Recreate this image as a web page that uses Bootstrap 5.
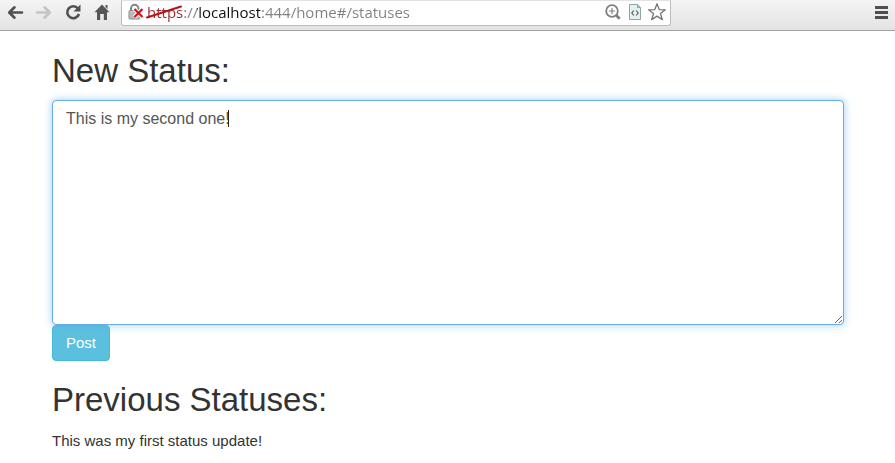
<!DOCTYPE html>
<html lang="en">
<head>
<meta charset="utf-8">
<meta name="viewport" content="width=device-width, initial-scale=1">
<title>Statuses</title>
<link href="https://cdn.jsdelivr.net/npm/bootstrap@5.3.0/dist/css/bootstrap.min.css" rel="stylesheet">
<style>
body { font: 15px/21px "Liberation Sans", Arial, sans-serif; color: #333; background: #fff; }
.toolbar { height: 31px; padding: 0 5px 5px; background: linear-gradient(#f4f4f4, #e3e3e3); border-bottom: 1px solid #a3a3a3; }
.tool { width: 20px; height: 20px; padding: 0; border: 0; background: none; line-height: 0; flex: none; }
.tool svg, .address svg { display: block; }
.nav-tools { width: 116px; gap: 9px; flex: none; }
.address { flex: 0 1 550px; min-width: 0; height: 26px; padding: 0 3px 1px 6px; background: #fff; border: 1px solid #bdbdbd; border-top-color: #e2e2e2; border-radius: 0 0 3px 3px; }
.address-tools { gap: 2px; }
.url-box { margin-left: 3px; }
.url { display: block; width: 100%; height: 22px; padding: 0; border: 0; outline: 0; font: 15px/22px "Open Sans", "Noto Sans", sans-serif; color: transparent;
  background: linear-gradient(90deg, #a3262c 36px, #808080 36px 50px, #111 50px 113px, #808080 113px) text; -webkit-background-clip: text; background-clip: text; }
.strike { left: -1px; top: 3px; pointer-events: none; }
.page { padding: 20px 51px 0 52px; }
h1 { font-size: 33px; line-height: 40px; font-weight: 400; margin: 0; color: #333; }
h1 label { display: block; }
.status-box { margin-top: 9px; }
.status-input { height: 225px; padding: 7px 13px; font-size: 16px; line-height: 21px; color: #555; border: 1px solid #66afe9; border-radius: 4px; box-shadow: 0 0 8px rgba(102, 175, 233, .6); }
.status-input:focus { color: #555; border-color: #66afe9; box-shadow: 0 0 8px rgba(102, 175, 233, .6); }
.caret { left: 176px; top: 10px; width: 1px; height: 17px; background: #222; }
.btn-post { height: 36px; padding: 0 13px; font-size: 15px; line-height: 34px; border-radius: 4px; color: #fff; background: #5bc0de; border-color: #46b8da; }
.btn-post:hover { color: #fff; background: #31b0d5; }
.previous { margin-top: 19px; }
.status-text { margin: 10px 0 0; }
</style>
</head>
<body>
<header class="toolbar d-flex align-items-center">
  <div class="nav-tools d-flex align-items-center">
    <button class="tool" type="button" aria-label="Back"><svg width="20" height="20" viewBox="0 0 20 20" fill="none" stroke="#505050" stroke-width="2.6" stroke-linecap="round" stroke-linejoin="round"><path d="M17 9.500H4.500M9.500 4.300 4.200 9.500l5.300 5.200"/></svg></button>
    <button class="tool" type="button" aria-label="Forward"><svg width="20" height="20" viewBox="0 0 20 20" fill="none" stroke="#c4c4c4" stroke-width="2.6" stroke-linecap="round" stroke-linejoin="round"><path d="M3 9.500h12.500M10.500 4.300 15.800 9.500l-5.300 5.200"/></svg></button>
    <button class="tool" type="button" aria-label="Reload"><svg width="20" height="20" viewBox="0 0 20 20"><path d="M15 5.500A6 6 0 1 0 16 11" fill="none" stroke="#505050" stroke-width="2.6"/><path d="M17.500 1.500V8.500H10.500Z" fill="#505050"/></svg></button>
    <button class="tool" type="button" aria-label="Home"><svg width="20" height="20" viewBox="0 0 20 20" fill="#555"><path d="M10 1.500 17.500 9.300H15V17H11.800V11H8.200V17H5V9.300H2.500ZM13.500 2H15.500V6L13.500 4Z"/></svg></button>
  </div>
  <div class="address d-flex align-items-center">
    <svg class="flex-shrink-0" width="16" height="18" viewBox="0 0 16 18" aria-hidden="true"><path d="M3 9V5.500a3.700 3.700 0 0 1 7.400 0V9" fill="none" stroke="#858585" stroke-width="2"/><rect x="1" y="7.500" width="11" height="8.500" rx="1" fill="#c9c9c9" stroke="#858585"/><path d="M2 10h9M2 12h9M2 14h9" stroke="#aaa"/><path d="m6.500 6 8 8m0-8-8 8" stroke="#fff" stroke-width="4"/><path d="m6.500 6 8 8m0-8-8 8" stroke="#d3131b" stroke-width="2.3"/></svg>
    <div class="url-box position-relative flex-grow-1">
      <input class="url" type="text" aria-label="Address" value="https://localhost:444/home#/statuses" spellcheck="false">
      <svg class="strike position-absolute" width="38" height="16" viewBox="0 0 38 16" aria-hidden="true"><path d="M1 13.500 35 2.500" stroke="#b3151b" stroke-width="2" stroke-linecap="round"/></svg>
    </div>
    <div class="address-tools d-flex align-items-center flex-shrink-0">
      <button class="tool" type="button" aria-label="Zoom"><svg width="20" height="20" viewBox="0 0 20 20" fill="none" stroke="#808080"><circle cx="9" cy="9" r="5.800" stroke-width="1.8"/><path d="m13.200 13.200 3.500 3.500" stroke-width="2.8"/><path d="M9 6v6M6 9h6" stroke-width="1.2"/></svg></button>
      <button class="tool" type="button" aria-label="View source"><svg width="20" height="20" viewBox="0 0 20 20" fill="none"><path d="M4.500 2.500H12.500L15.500 5.500V17.500H4.500Z" fill="#e4f0f1" stroke="#8fa5a8"/><path d="M12.500 2.500v3h3" fill="#a9c3c7" stroke="#8fa5a8"/><path d="M8.800 8.500 6.800 11 8.800 13.500M11.200 8.500l2 2.500-2 2.500" stroke="#555" stroke-width="1.1"/></svg></button>
      <button class="tool" type="button" aria-label="Bookmark"><svg width="20" height="20" viewBox="0 0 20 20" fill="#fff" stroke="#747474" stroke-width="1.3" stroke-linejoin="round"><path d="m10 1.800 2.200 5.800 6.200.2-4.900 3.800 1.800 6-5.300-3.500-5.300 3.500 1.800-6L1.600 7.800l6.200-.2Z"/></svg></button>
    </div>
  </div>
  <button class="tool ms-auto" type="button" aria-label="Menu"><svg width="20" height="20" viewBox="0 0 20 20" fill="#505050"><path d="M5 3h13v3H5zM5 8h13v3H5zM5 13h13v3H5z"/></svg></button>
</header>
<main class="page">
  <h1><label for="status">New Status:</label></h1>
  <div class="status-box position-relative">
    <textarea class="form-control status-input" id="status" spellcheck="false">This is my second one!</textarea>
    <span class="caret position-absolute"></span>
  </div>
  <button class="btn btn-info btn-post" type="button">Post</button>
  <h1 class="previous">Previous Statuses:</h1>
  <p class="status-text">This was my first status update!</p>
</main>
<script src="https://cdn.jsdelivr.net/npm/bootstrap@5.3.0/dist/js/bootstrap.bundle.min.js"></script>
</body>
</html>
